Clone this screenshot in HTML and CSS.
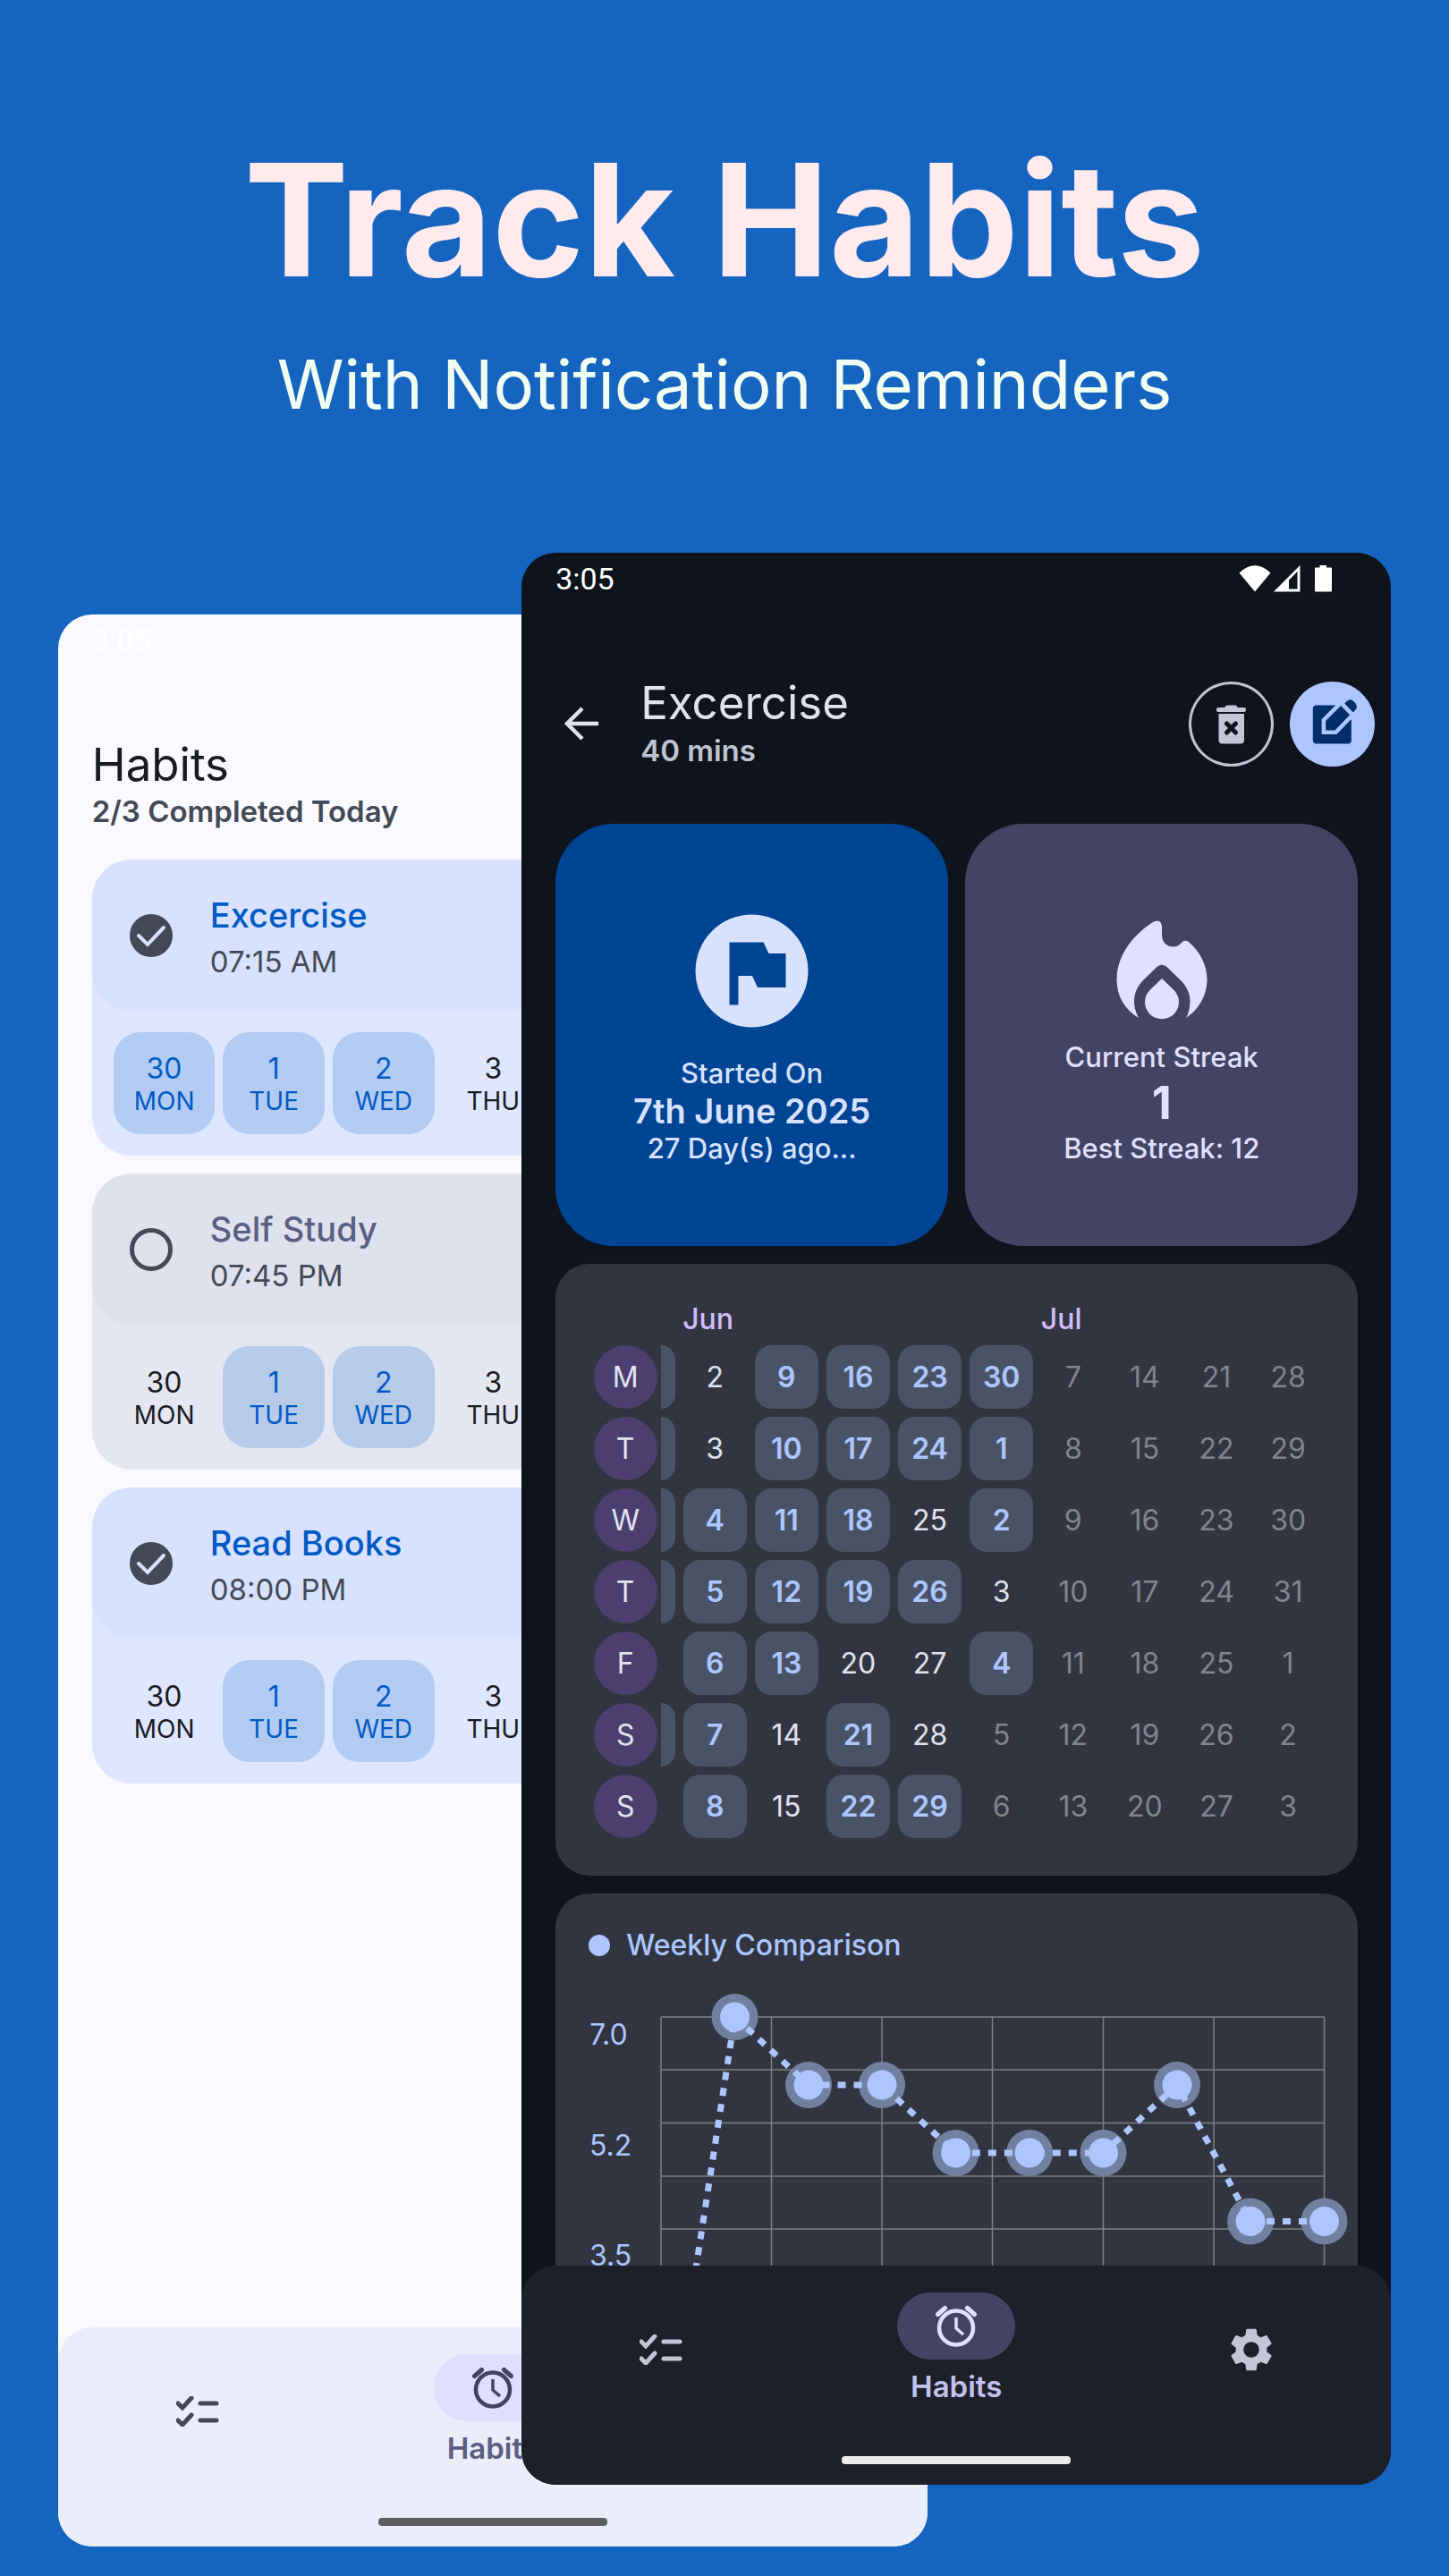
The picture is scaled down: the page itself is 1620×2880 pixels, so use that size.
FILE: index.html
```
<!DOCTYPE html>
<html lang="en">
<head>
<meta charset="utf-8">
<meta name="viewport" content="width=device-width, initial-scale=1">
<title>Track Habits</title>
<link rel="stylesheet" href="styles.css">
</head>
<body>
<svg class="sprite" aria-hidden="true">
  <symbol id="i-list" viewBox="0 0 48 34"><path d="M2 8l5 5L17 2M27 8h18M2 27l5 5 10-11M27 27h18" fill="none" stroke="currentColor" stroke-width="5" stroke-linecap="round"/></symbol>
  <symbol id="i-alarm" viewBox="0 0 48 48"><circle cx="24" cy="26.500" r="19" fill="none" stroke="currentColor" stroke-width="4.500"/><path d="M3.500 11.500l8-7M44.500 11.500l-8-7" fill="none" stroke="currentColor" stroke-width="5" stroke-linecap="round"/><path d="M24 15v12l8 7" fill="none" stroke="currentColor" stroke-width="3.500"/></symbol>
  <symbol id="i-gear" viewBox="0 0 24 24"><path fill="currentColor" d="M19.140 12.940c.040-.300.060-.610.060-.940 0-.320-.020-.640-.070-.940l2.030-1.580c.180-.140.230-.410.120-.610l-1.920-3.320c-.120-.220-.370-.290-.590-.220l-2.390.960c-.500-.380-1.030-.700-1.620-.940l-.360-2.540c-.040-.240-.240-.410-.480-.410h-3.840c-.240 0-.430.170-.470.410l-.360 2.540c-.590.240-1.130.570-1.620.940l-2.390-.960c-.220-.080-.470 0-.590.220L2.740 8.870c-.120.210-.080.470.120.610l2.030 1.580c-.050.300-.090.630-.090.940s.020.640.070.940l-2.030 1.580c-.180.140-.230.410-.120.610l1.920 3.320c.120.220.370.290.590.220l2.390-.960c.500.380 1.030.700 1.620.940l.360 2.540c.050.240.240.410.480.410h3.840c.240 0 .440-.170.470-.410l.360-2.540c.590-.240 1.130-.560 1.620-.940l2.390.960c.220.080.470 0 .590-.220l1.920-3.320c.120-.220.070-.470-.120-.610l-2.010-1.580zM12 15.600c-1.980 0-3.600-1.620-3.600-3.600s1.620-3.600 3.600-3.600 3.600 1.620 3.600 3.600-1.620 3.600-3.600 3.600z"/></symbol>
  <symbol id="i-tick" viewBox="0 0 58 58"><path d="M15 29l10 10 18-19" fill="none" stroke="#d8e2ff" stroke-width="4" stroke-linecap="round"/></symbol>
</svg>

<header class="hero">
  <h1>Track Habits</h1>
  <p>With Notification Reminders</p>
</header>

<main class="stage">
  <section class="phone phone-light" aria-label="Habit list">
    <div class="status"><span>3:05</span></div>
    <div class="screen">
      <div class="list-head">
        <h2>Habits</h2>
        <p>2/3 Completed Today</p>
      </div>
      <article class="habit">
        <div class="habit-top">
          <span class="tick"><input type="checkbox" id="h1" checked><svg><use href="#i-tick"/></svg></span>
          <div class="habit-text"><label for="h1">Excercise</label><p>07:15 AM</p></div>
        </div>
        <ol class="days">
          <li class="done"><b>30</b>MON</li><li class="done"><b>1</b>TUE</li><li class="done"><b>2</b>WED</li><li><b>3</b>THU</li>
        </ol>
      </article>
      <article class="habit open">
        <div class="habit-top">
          <span class="tick"><input type="checkbox" id="h2"></span>
          <div class="habit-text"><label for="h2">Self Study</label><p>07:45 PM</p></div>
        </div>
        <ol class="days">
          <li><b>30</b>MON</li><li class="done"><b>1</b>TUE</li><li class="done"><b>2</b>WED</li><li><b>3</b>THU</li>
        </ol>
      </article>
      <article class="habit">
        <div class="habit-top">
          <span class="tick"><input type="checkbox" id="h3" checked><svg><use href="#i-tick"/></svg></span>
          <div class="habit-text"><label for="h3">Read Books</label><p>08:00 PM</p></div>
        </div>
        <ol class="days">
          <li><b>30</b>MON</li><li class="done"><b>1</b>TUE</li><li class="done"><b>2</b>WED</li><li><b>3</b>THU</li>
        </ol>
      </article>
    </div>
    <nav class="nav" aria-label="Main">
      <div class="nav-row">
        <a href="#tasks" aria-label="Tasks"><svg class="ic-list"><use href="#i-list"/></svg></a>
        <a href="#habits"><span class="pill"><svg class="ic-alarm"><use href="#i-alarm"/></svg></span>Habits</a>
        <a href="#settings" aria-label="Settings"><svg class="ic-gear"><use href="#i-gear"/></svg></a>
      </div>
      <div class="handle"></div>
    </nav>
  </section>

  <section class="phone phone-dark" aria-label="Habit details">
    <div class="status">
      <span>3:05</span>
      <svg class="status-icons" viewBox="75 20 105 32" aria-hidden="true"><path fill="#fff" fill-rule="evenodd" d="M75.500 29.500Q93 13 110.500 29.500L93 50.500ZM114 50.500L143.500 21V50.500ZM131 37.500V47.500H140.500V28ZM160 24.500q0-1 1-1h4.500V21H173v2.500h5q1 0 1 1V49.500q0 1-1 1H161q-1 0-1-1Z"/></svg>
    </div>
    <div class="screen">
      <div class="detail-head">
        <a class="back" href="#back" aria-label="Back"><svg viewBox="0 0 58 58"><path d="M48 29H14M30 12L13 29l17 17" fill="none" stroke="currentColor" stroke-width="4.500"/></svg></a>
        <div class="detail-title"><h2>Excercise</h2><p>40 mins</p></div>
        <button class="round outline" aria-label="Delete"><svg viewBox="18.500 150 95 95"><path fill="currentColor" d="M59 179q0-2.500 3-2.500h8q3 0 3 2.500h7.500q2 0 2 2v1q0 2-2 2h-29q-2 0-2-2v-1q0-2 2-2ZM52 186H80.500V215.500q0 4-4 4H56q-4 0-4-4Z"/><path d="M61 197l10 10M71 197l-10 10" stroke="#0f131b" stroke-width="5" stroke-linecap="round"/></svg></button>
        <button class="round filled" aria-label="Edit"><svg viewBox="132.200 150 95 95"><path fill="currentColor" d="M162 176.500H184.500L201 193V215.500q0 4-4 4H162q-4 0-4-4V180.500q0-4 4-4Z"/><path fill="currentColor" stroke="#adc6ff" stroke-width="9" paint-order="stroke" d="M172.300 194L189.300 177 199.300 187.300 182.700 204.500H172.300Z"/><path fill="currentColor" d="M193.500 174.500L196 172q4-3.500 8 .5t2.500 8L203 184.500Z"/></svg></button>
      </div>

      <div class="cards">
        <div class="stats">
          <div class="stat started">
            <svg viewBox="0 0 151 151" aria-hidden="true"><circle cx="75.500" cy="75.500" r="63" fill="#d8e2ff"/><path fill="#004494" d="M50.500 43.500h38l6 12.500h19V94H82l-6-13H60.500v32.500h-10Z"/></svg>
            <p>Started On</p><p class="big">7th June 2025</p><p>27 Day(s) ago...</p>
          </div>
          <div class="stat streak">
            <svg viewBox="-8 -2 151 151" aria-hidden="true"><path fill="#e0e0ff" d="M57 19.500Q67 14 68 24V33C68 42 74 46.500 81 46.500 86 46.500 89 43 91 41Q95 38 99 42C111 53 118.500 67 118.500 83 118.500 101 109 117 95 126 98 121 99.500 114 99.500 107 99.500 98 95 90 89 84L73 68.500Q68 65 63 68.500L47 84C41 90 37 98 37 107 37 114 39 121 42 126 27 117 17.500 102 17.500 83 17.500 57 34 35 57 19.500ZM68 82L81 94.500A19 19 0 1 1 55 94.500Z"/></svg>
            <p>Current Streak</p><p class="count">1</p><p>Best Streak: 12</p>
          </div>
        </div>

        <div class="card calendar">
          <table>
            <colgroup><col class="c-day"><col class="c-peek"><col span="9"></colgroup>
            <thead><tr><td></td><td></td><th colspan="5" scope="colgroup">Jun</th><th colspan="4" scope="colgroup">Jul</th></tr></thead>
            <tbody>
              <tr><th scope="row"><span>M</span></th><td class="peek"><i></i></td><td>2</td><td><b>9</b></td><td><b>16</b></td><td><b>23</b></td><td><b>30</b></td><td class="off">7</td><td class="off">14</td><td class="off">21</td><td class="off">28</td></tr>
              <tr><th scope="row"><span>T</span></th><td class="peek"><i></i></td><td>3</td><td><b>10</b></td><td><b>17</b></td><td><b>24</b></td><td><b>1</b></td><td class="off">8</td><td class="off">15</td><td class="off">22</td><td class="off">29</td></tr>
              <tr><th scope="row"><span>W</span></th><td class="peek"><i></i></td><td><b>4</b></td><td><b>11</b></td><td><b>18</b></td><td>25</td><td><b>2</b></td><td class="off">9</td><td class="off">16</td><td class="off">23</td><td class="off">30</td></tr>
              <tr><th scope="row"><span>T</span></th><td class="peek"><i></i></td><td><b>5</b></td><td><b>12</b></td><td><b>19</b></td><td><b>26</b></td><td>3</td><td class="off">10</td><td class="off">17</td><td class="off">24</td><td class="off">31</td></tr>
              <tr><th scope="row"><span>F</span></th><td class="peek"></td><td><b>6</b></td><td><b>13</b></td><td>20</td><td>27</td><td><b>4</b></td><td class="off">11</td><td class="off">18</td><td class="off">25</td><td class="off">1</td></tr>
              <tr><th scope="row"><span>S</span></th><td class="peek"><i></i></td><td><b>7</b></td><td>14</td><td><b>21</b></td><td>28</td><td class="off">5</td><td class="off">12</td><td class="off">19</td><td class="off">26</td><td class="off">2</td></tr>
              <tr><th scope="row"><span>S</span></th><td class="peek"></td><td><b>8</b></td><td>15</td><td><b>22</b></td><td><b>29</b></td><td class="off">6</td><td class="off">13</td><td class="off">20</td><td class="off">27</td><td class="off">3</td></tr>
            </tbody>
          </table>
        </div>

        <div class="card chart">
          <h3>Weekly Comparison</h3>
          <svg viewBox="0 0 897 620" role="img" aria-label="Weekly comparison line chart">
            <path class="grid" d="M118 50H859.500M118 109H859.500M118 168.500H859.500M118 228H859.500M118 287H859.500M118 346H859.500M118 405H859.500M118 464H859.500M118 523H859.500M118 583H859.500M118 50V583M241.500 50V583M365 50V583M488.500 50V583M612.500 50V583M736 50V583M859.500 50V583"/>
            <g class="halo"><circle cx="200.500" cy="50" r="26"/><circle cx="283" cy="126" r="26"/><circle cx="365" cy="126" r="26"/><circle cx="447.500" cy="202" r="26"/><circle cx="530" cy="202" r="26"/><circle cx="612.500" cy="202" r="26"/><circle cx="695" cy="126" r="26"/><circle cx="777" cy="278.500" r="26"/><circle cx="859.500" cy="278.500" r="26"/></g>
            <path class="line" d="M118 583L200.500 50 283 126H365L447.500 202H612.500L695 126 777 278.500H859.500"/>
            <g class="dot"><circle cx="200.500" cy="50" r="16.500"/><circle cx="283" cy="126" r="16.500"/><circle cx="365" cy="126" r="16.500"/><circle cx="447.500" cy="202" r="16.500"/><circle cx="530" cy="202" r="16.500"/><circle cx="612.500" cy="202" r="16.500"/><circle cx="695" cy="126" r="16.500"/><circle cx="777" cy="278.500" r="16.500"/><circle cx="859.500" cy="278.500" r="16.500"/></g>
            <text x="38" y="81">7.0</text><text x="38" y="205">5.2</text><text x="38" y="328">3.5</text>
          </svg>
        </div>
      </div>
    </div>
    <nav class="nav" aria-label="Main">
      <div class="nav-row">
        <a href="#tasks" aria-label="Tasks"><svg class="ic-list"><use href="#i-list"/></svg></a>
        <a href="#habits"><span class="pill"><svg class="ic-alarm"><use href="#i-alarm"/></svg></span>Habits</a>
        <a href="#settings" aria-label="Settings"><svg class="ic-gear"><use href="#i-gear"/></svg></a>
      </div>
      <div class="handle"></div>
    </nav>
  </section>
</main>
</body>
</html>
```
FILE: styles.css
```
* { box-sizing: border-box; margin: 0; padding: 0; }
body { background: #1565c0; font-family: Inter, "Liberation Sans", sans-serif; }
svg { display: block; flex: none; }
a { color: inherit; text-decoration: none; }
ol { list-style: none; }
.sprite { width: 0; height: 0; position: absolute; }

.hero { padding: 141px 40px 144px; text-align: center; }
.hero h1 { font-size: 175px; line-height: 208px; font-weight: 700; color: #ffebee; }
.hero p { margin-top: 35px; font-size: 76px; line-height: 90px; color: #f1fff3; }

/* The two phones share one grid cell and overlap */
.stage { display: grid; padding: 0 4% 32px; }
.phone {
  grid-area: 1 / 1;
  width: 65.220%;
  aspect-ratio: 9 / 20;
  display: flex;
  flex-direction: column;
  overflow: hidden;
  border-radius: 38px;
}
.phone-light { justify-self: start; margin-top: 69px; background: #faf9ff; color: #191b23; }
.phone-dark { justify-self: end; background: #0f131b; color: #e0e2ef; }

.status {
  display: flex;
  justify-content: space-between;
  align-items: center;
  height: 58px;
  flex: none;
  padding: 0 65px 0 38px;
  font: 34px/40px Roboto, sans-serif;
  color: #fff;
}
.status-icons { width: 105px; height: 32px; }
.screen { flex: 1; min-height: 0; overflow: hidden; padding: 0 37px 0 38px; }

/* Habit list */
.list-head { padding: 80px 0 32px; }
.list-head h2, .detail-title h2 { font-size: 51px; line-height: 60px; font-weight: 400; }
.list-head p { font-size: 33px; line-height: 44px; font-weight: 600; color: #444955; }
.habit { margin-bottom: 20px; border-radius: 44px; background: #dfe6ff; overflow: hidden; }
.habit-top {
  display: flex;
  align-items: center;
  gap: 37px;
  height: 169px;
  padding: 0 37px;
  border-radius: 44px;
  background: #d8e2ff;
}
.habit-text { padding-top: 6px; }
.habit label { display: block; font-size: 38px; line-height: 52px; font-weight: 500; color: #005ac4; }
.habit-top p { font-size: 33px; line-height: 52px; color: #444955; }
.tick { display: grid; width: 58px; height: 58px; place-items: center; }
.tick > * { grid-area: 1 / 1; }
.tick svg { width: 58px; height: 58px; pointer-events: none; }
.tick input { appearance: none; width: 48px; height: 48px; border: 5px solid #444955; border-radius: 50%; }
.tick input:checked { background: #444955; }
.days { display: grid; grid-template-columns: repeat(7, 1fr); gap: 9px; padding: 24px; }
.days li {
  height: 114px;
  padding-top: 23px;
  border-radius: 30px;
  text-align: center;
  font-size: 28px;
  line-height: 36px;
}
.days b { display: block; font-size: 32px; font-weight: 400; }
.days .done { background: #b1cbf2; color: #005ac4; }
.open { background: #e4e6f1; }
.open .habit-top { background: #dfe2ed; }
.open label { color: #5b5d82; }
.open .done { background: #b6cbe9; }

/* Bottom navigation */
.nav { flex: none; padding-bottom: 23px; border-radius: 38px 38px 0 0; }
.nav-row { display: grid; grid-template-columns: repeat(3, 1fr); gap: 18px; height: 188px; }
.nav a {
  display: flex;
  flex-direction: column;
  align-items: center;
  justify-content: center;
  gap: 6px;
  font-size: 33px;
  line-height: 48px;
  font-weight: 600;
}
.pill { display: grid; place-items: center; width: 132px; height: 75px; border-radius: 38px; }
.ic-list { width: 48px; height: 34px; }
.ic-alarm { width: 48px; height: 48px; }
.ic-gear { width: 58px; height: 58px; }
.handle { width: 256px; height: 9px; margin: 25px auto 0; border-radius: 4px; }
.phone-light .nav { background: #ebedfa; color: #5b5d82; }
.phone-light .pill { background: #dfdfff; color: #414363; }
.phone-light .ic-list, .phone-light .ic-gear { color: #444955; }
.phone-light .handle { background: #5e5f63; }
.phone-dark .nav { background: #1d2029; color: #c3c1ec; }
.phone-dark .pill { background: #434364; color: #e0e0ff; }
.phone-dark .ic-list, .phone-dark .ic-gear { color: #c4c6d6; }
.phone-dark .handle { background: #ecedeb; }

/* Habit details */
.detail-head { display: flex; align-items: center; gap: 18px; margin-right: -19px; padding: 80px 0 59px; }
.back svg { width: 58px; height: 58px; }
.detail-title { flex: 1; padding-left: 19px; }
.detail-title p { font-size: 33px; line-height: 46px; font-weight: 600; color: #c0c3d1; }
.round { width: 95px; height: 95px; border: 0; border-radius: 50%; overflow: hidden; }
.round svg { width: 95px; height: 95px; }
.outline { background: none; box-shadow: inset 0 0 0 3px #c0c3d3; color: #c4c6d6; }
.filled { background: #adc6ff; color: #002e69; }

.cards { display: grid; gap: 20px; }
.stats { display: grid; grid-template-columns: 1fr 1fr; gap: 19px; }
.stat {
  display: flex;
  flex-direction: column;
  align-items: center;
  justify-content: center;
  height: 472px;
  border-radius: 65px;
  font-size: 31px;
  line-height: 42px;
  font-weight: 500;
}
.stat svg { width: 151px; height: 151px; }
.started { background: #004494; color: #d8e2ff; }
.started svg { margin-bottom: 18px; }
.started .big { font-size: 38px; font-weight: 600; }
.streak { background: #434364; color: #e0e0ff; }
.streak .count { font-size: 51px; line-height: 60px; font-weight: 700; }

.card { border-radius: 38px; background: #32353f; }
.calendar { padding: 37px 38px 38px; }
table { width: 100%; table-layout: fixed; border-collapse: collapse; font-size: 32px; }
.c-peek { width: 20px; }
.c-day { width: 80px; }
thead tr { height: 49px; }
thead th { padding-left: 4px; text-align: left; font-weight: 500; color: #d0bcfb; }
tbody tr { height: 80px; }
tbody th, tbody td { text-align: center; font-weight: 400; }
tbody span, tbody b { display: block; width: 71px; margin: 0 auto; line-height: 71px; }
tbody span { border-radius: 50%; background: #4a3f6e; }
tbody b { border-radius: 19px; background: #4a5366; color: #adc6ff; font-weight: 600; }
.peek i { display: block; width: 16px; height: 71px; border-radius: 0 16px 16px 0; background: #4a5366; }
.off { color: #81848d; }

.chart { padding-top: 37px; color: #adc6ff; }
.chart h3 { display: flex; align-items: center; gap: 18px; padding: 0 37px; font-size: 32px; line-height: 42px; font-weight: 500; }
.chart h3::before { content: ""; width: 24px; height: 24px; border-radius: 50%; background: #adc6ff; }
.chart svg { width: 100%; height: auto; margin-top: 9px; }
.grid { fill: none; stroke: #7e7f80; stroke-width: 1.500; }
.halo { fill: #71809f; }
.line { fill: none; stroke: #adc6ff; stroke-width: 7; stroke-dasharray: 9 9; }
.dot { fill: #adc6ff; }
.chart text { fill: #adc6ff; font-size: 32px; }
```
